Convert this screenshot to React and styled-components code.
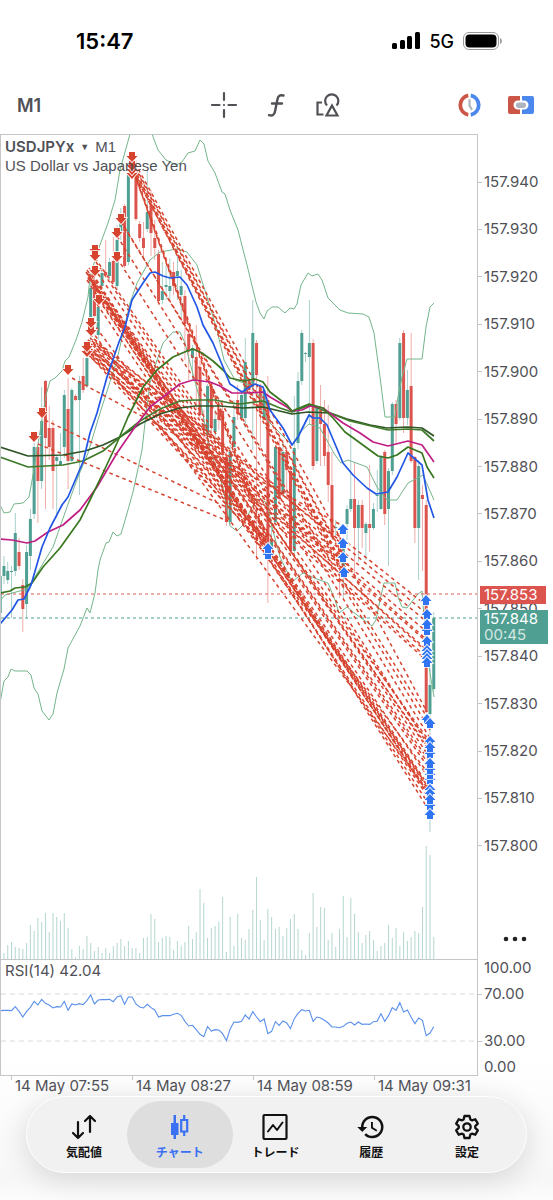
import React from "react";
import styled, { createGlobalStyle } from "styled-components";
import { MdHistory } from "react-icons/md";

const GlobalStyle = createGlobalStyle`
  * { box-sizing: border-box; }
  body {
    margin: 0;
    background: #fff;
    color: #505157;
    font-family: Inter, "Noto Sans CJK JP", sans-serif;
  }
  button { font: inherit; color: inherit; background: none; border: 0; padding: 0; cursor: pointer; }
`;

const UP = "#4f9f92";
const DOWN = "#dc544e";
const SELL = "#d6432e";
const BUY = "#2f74f2";
const LINE = "#c4c6ca";

/* ---------- layout ---------- */

const Screen = styled.main`
  min-height: 100vh;
  display: flex;
  flex-direction: column;
  background: linear-gradient(#fff 0 1060px, #f7f7f7 1180px, #fcfcfc);
`;

const StatusBar = styled.header`
  height: 82px;
  padding: 0 50px 0 76px;
  display: flex;
  align-items: center;
  justify-content: space-between;
  color: #000;
`;

const Clock = styled.time`
  font-size: 22px;
  font-weight: 600;
`;

const StatusIcons = styled.div`
  display: flex;
  align-items: center;
  gap: 9px;
  font-size: 18px;
  font-weight: 500;
  svg { display: block; }
`;

const Toolbar = styled.div`
  height: 46px;
  margin-bottom: 6px;
  padding: 0 19px 0 17px;
  display: grid;
  grid-template-columns: 1fr auto 1fr;
  align-items: center;
`;

const Timeframe = styled.button`
  justify-self: start;
  font-size: 18px;
  font-weight: 600;
`;

const ToolGroup = styled.div`
  display: flex;
  gap: 26px;
  justify-self: ${(p) => (p.$end ? "end" : "center")};
`;

const ToolButton = styled.button`
  width: 26px;
  height: 26px;
  svg { display: block; width: 26px; height: 26px; overflow: visible; }
`;

const Panel = styled.section`
  position: relative;
  display: grid;
  grid-template-columns: minmax(0, 1fr) 75px;
`;

const Plot = styled.div`
  border: 1px solid ${LINE};
  border-bottom-width: ${(p) => (p.$last ? "1px" : 0)};
  svg { display: block; width: 100%; }
`;

const Caption = styled.div`
  position: absolute;
  top: ${(p) => p.$top};
  left: 5px;
  font-family: ${(p) => (p.$plain ? "inherit" : '"Liberation Sans", sans-serif')};
  font-size: 15px;
  line-height: 18px;
`;

const SymbolButton = styled.button`
  display: flex;
  align-items: center;
  gap: 6px;
  margin-bottom: 1px;
  line-height: 18px;
  b { font-weight: 600; font-family: Inter, sans-serif; font-size: 15px; }
  small { font-size: 9px; }
`;

const PriceScale = styled.ol`
  list-style: none;
  margin: 0;
  padding: 40px 0 105px;
  display: flex;
  flex-direction: column;
  justify-content: space-between;
`;

const ScaleLabel = styled.li`
  display: flex;
  align-items: center;
  gap: 2px;
  font-size: 15px;
  line-height: 16px;
  &::before {
    content: "";
    width: 4px;
    height: 1px;
    background: ${(p) => (p.$bare ? "transparent" : LINE)};
  }
`;

const RsiScale = styled(PriceScale)`
  padding: 1px 0;
  ol { list-style: none; margin: 0; padding: 0; display: grid; gap: 10px; }
`;

const PriceTag = styled.div`
  position: absolute;
  top: ${(p) => p.$top};
  right: ${(p) => p.$right};
  left: calc(100% - 73px);
  padding: 1px 4px;
  background: ${(p) => p.$color};
  color: #fff;
  font-size: 15px;
  line-height: 16px;
  span { display: block; opacity: 0.75; }
`;

const MoreButton = styled.button`
  position: absolute;
  right: 26px;
  bottom: 15px;
  svg { display: block; }
`;

const TimeScale = styled.ol`
  list-style: none;
  margin: 0;
  padding: 0 58px 0 11px;
  display: grid;
  grid-template-columns: repeat(4, 1fr);
`;

const TimeLabel = styled.li`
  position: relative;
  padding-left: 4px;
  font-size: 15px;
  line-height: 20px;
  white-space: nowrap;
  &::before {
    content: "";
    position: absolute;
    left: 0;
    top: 0;
    width: 1px;
    height: 4px;
    background: ${LINE};
  }
`;

const TabBar = styled.nav`
  margin: 0 26px 27px;
  padding: 4px 11px 4px 9px;
  height: 77px;
  display: flex;
  border: 1px solid #fff;
  border-radius: 39px;
  background: #f1f1f1;
  box-shadow: 0 6px 30px rgba(0, 0, 0, 0.14);
`;

const Tab = styled.button`
  flex: 1;
  margin: 0 -5px;
  padding-top: 4px;
  display: flex;
  flex-direction: column;
  align-items: center;
  justify-content: center;
  gap: 2px;
  border-radius: 34px;
  background: ${(p) => (p.$active ? "#dedede" : "transparent")};
  color: ${(p) => (p.$active ? "#3a70f2" : "#111")};
  font-size: 12px;
  line-height: 18px;
  font-weight: 600;
  svg { display: block; width: 30px; height: 30px; }
`;

/* ---------- chart data ---------- */

const STEP = 3.77;
const barX = (i) => 0.2 + STEP * i;

// Each bar: high, body top, body bottom, low, direction
const candles = [
  [576, 576, 613, 613, 1], [556, 566, 576, 584, 1], [562, 571, 580, 584, 1], [566, 571, 572, 618, 1],
  [513, 533, 571, 576, 1], [538, 552, 566, 570, 0], [579, 585, 609, 632, 0], [545, 552, 604, 618, 1],
  [509, 519, 556, 570, 1], [443, 447, 514, 519, 1], [445, 447, 481, 523, 0], [387, 421, 481, 489, 1],
  [380, 381, 438, 509, 0], [406, 428, 447, 460, 0], [420, 428, 471, 509, 0], [455, 457, 461, 518, 1],
  [433, 461, 465, 466, 1], [390, 395, 447, 458, 1], [378, 409, 461, 489, 0], [388, 390, 461, 462, 1],
  [394, 396, 400, 401, 0], [376, 381, 400, 495, 1], [358, 376, 390, 393, 0], [355, 358, 386, 388, 1],
  [280, 288, 317, 350, 1], [270, 283, 316, 322, 0], [295, 307, 335, 340, 1], [268, 273, 286, 288, 1],
  [240, 272, 275, 278, 0], [258, 262, 276, 280, 1], [237, 261, 282, 284, 0], [225, 240, 286, 290, 1],
  [208, 218, 232, 240, 1], [204, 206, 266, 268, 0], [160, 174, 262, 265, 1], [158, 162, 176, 180, 0],
  [160, 172, 219, 221, 0], [221, 224, 238, 242, 0], [222, 238, 248, 258, 0], [170, 212, 229, 232, 1],
  [190, 204, 233, 256, 0], [220, 238, 248, 260, 0], [250, 254, 301, 305, 0], [262, 291, 300, 304, 1],
  [265, 285, 287, 300, 1], [258, 286, 291, 300, 1], [262, 272, 286, 295, 0], [255, 271, 276, 300, 1],
  [270, 286, 295, 320, 1], [290, 296, 324, 360, 0], [332, 334, 349, 380, 0], [345, 348, 358, 380, 1],
  [325, 357, 380, 410, 0], [360, 367, 415, 418, 0], [410, 424, 430, 440, 0], [384, 386, 435, 445, 1],
  [384, 386, 428, 432, 0], [410, 419, 432, 440, 1], [400, 409, 420, 430, 0], [400, 411, 452, 458, 0],
  [450, 457, 522, 526, 0], [445, 452, 522, 525, 1], [400, 417, 447, 450, 1], [385, 400, 414, 420, 0],
  [392, 395, 418, 420, 1], [338, 362, 418, 428, 1], [378, 380, 390, 395, 0], [300, 333, 385, 450, 1],
  [340, 343, 375, 560, 0], [384, 386, 410, 447, 0], [388, 390, 418, 420, 1], [376, 400, 545, 603, 0],
  [520, 540, 547, 562, 1], [445, 447, 522, 524, 1], [440, 447, 499, 502, 0], [440, 452, 494, 497, 1],
  [448, 452, 470, 497, 0], [466, 471, 551, 556, 0], [396, 448, 551, 556, 1], [372, 381, 443, 449, 1],
  [330, 333, 381, 385, 1], [352, 353, 354, 362, 1], [300, 343, 357, 424, 1], [339, 343, 466, 470, 0],
  [406, 408, 461, 464, 1], [385, 410, 424, 466, 0], [400, 424, 456, 466, 0], [405, 452, 485, 502, 0],
  [452, 485, 537, 540, 0], [520, 527, 528, 536, 1], [528, 548, 552, 598, 0], [540, 545, 572, 598, 1],
  [505, 509, 524, 540, 1], [424, 499, 509, 512, 1], [463, 499, 528, 576, 0], [500, 505, 528, 562, 1],
  [500, 505, 528, 548, 0], [522, 524, 533, 560, 1], [465, 524, 528, 552, 0], [503, 509, 528, 530, 1],
  [470, 495, 496, 512, 1], [455, 456, 509, 510, 1], [450, 452, 514, 525, 0], [468, 471, 509, 566, 1],
  [402, 404, 471, 475, 1], [400, 404, 424, 445, 0], [338, 343, 418, 420, 1], [330, 333, 418, 433, 0],
  [370, 390, 418, 425, 1], [333, 386, 461, 463, 0], [456, 457, 528, 543, 0], [460, 466, 528, 580, 1],
  [485, 495, 499, 571, 0], [500, 505, 712, 715, 0], [650, 685, 714, 832, 1], [612, 618, 689, 692, 1],
];

const volume = [
  0, 6, 14, 17, 12, 11, 10, 16, 34, 28, 41, 37, 46, 27, 46, 42, 38, 46, 31, 10, 2, 13, 10, 23, 16, 8, 12, 6, 11,
  6, 13, 16, 20, 13, 18, 11, 11, 6, 21, 22, 45, 40, 17, 21, 23, 22, 9, 18, 13, 17, 33, 20, 27, 70, 56, 21, 31, 33,
  37, 62, 7, 42, 13, 45, 21, 19, 30, 49, 82, 39, 19, 50, 42, 30, 32, 23, 31, 40, 45, 30, 9, 4, 26, 66, 32, 52, 51,
  19, 26, 12, 30, 63, 22, 61, 45, 27, 16, 24, 28, 19, 8, 13, 16, 34, 21, 31, 13, 27, 18, 22, 28, 26, 52, 113, 104, 22,
];

const rsi = [
  512, 511, 511, 512, 500, 514, 531, 514, 502, 484, 495, 478, 490, 495, 504, 500, 501, 484, 511, 492, 495, 491,
  494, 482, 465, 492, 480, 479, 479, 478, 485, 471, 467, 493, 471, 471, 492, 501, 504, 493, 503, 510, 531, 527,
  527, 527, 523, 520, 526, 544, 558, 556, 569, 583, 590, 560, 573, 569, 570, 581, 602, 567, 546, 547, 544, 525,
  537, 515, 531, 545, 537, 581, 574, 545, 556, 543, 549, 566, 536, 520, 509, 513, 511, 544, 531, 534, 541, 549,
  561, 561, 563, 559, 550, 546, 555, 546, 553, 552, 553, 545, 544, 521, 544, 527, 503, 511, 488, 516, 510, 532,
  551, 534, 541, 587, 579, 560,
];

const bands = [
  "0,505 4,513 10,512 14,504 23,503 29,497 33,475 37,450 42,420 46,395 50,381 55,378 62,371 65,361 69,357 76,340 82,322 88,297 90,277 97,253 108,223 115,200 120,170 130,134 134,120 146,120 152,134 158,150 166,160 176,165 182,162 188,153 195,151 200,140 204,144 208,161 215,173 222,192 225,194 230,210 238,230 247,265 256,302 260,313 264,319 267,311 272,307 278,307 285,313 290,308 294,309 297,304 301,285 308,273 312,276 318,274 322,280 328,298 333,303 340,310 348,313 363,314 369,317 374,333 380,377 385,417 395,417 398,397 402,377 407,359 422,359 426,327 430,307 434,303",
  "0,601 5,595 27,589 33,580 53,547 67,507 78,477 88,453 100,413 117,360 123,333 130,303 137,283 150,260 160,252 177,249 187,252 197,265 207,297 217,330 224,360 235,380 250,385 260,397 267,420 280,433 292,445 300,432 309,424 320,428 335,455 341,463 348,460 367,467 377,487 387,500 397,500 408,483 423,475 434,500",
  "0,703 4,681 8,677 11,669 15,671 27,671 31,675 34,688 38,694 42,711 49,720 53,714 57,693 64,669 68,648 80,626 87,608 90,613 95,593 98,570 100,560 106,543 109,542 113,532 117,536 121,534 126,517 133,492 142,450 145,423 150,383 157,360 163,343 173,332 180,332 185,343 190,363 200,400 210,450 223,487 230,526 237,531 243,525 253,505 260,499 267,503 272,527 280,557 292,582 303,573 317,579 328,583 335,600 339,613 347,607 357,615 372,626 376,620 380,600 384,583 395,583 398,597 402,607 407,608 417,595 422,591 424,617 430,673 434,697",
];

const averages = [
  { color: "#2f5527", pts: "0,447 28,456 63,455 85,451 103,445 120,437 140,424 160,414 180,408 195,406 220,406 243,408 263,407 292,414 308,412 330,413 347,419 370,425 387,428 407,427 422,428 434,436" },
  { color: "#3f7a2a", pts: "0,457 28,467 63,465 83,461 103,451 120,437 140,421 160,409 180,401 193,400 215,400 230,403 240,404 263,401 280,408 292,412 310,405 330,413 350,421 388,430 408,429 422,430 434,441" },
  { color: "#bf1f84", pts: "0,539 12,540 27,543 35,541 48,532 63,525 80,510 97,487 117,453 135,427 150,407 163,397 180,384 193,380 210,382 220,386 232,393 247,393 263,392 270,397 287,407 292,411 302,410 310,406 323,408 343,423 360,433 373,442 388,446 408,441 422,445 434,462" },
  { color: "#38771f", pts: "0,593 10,591 15,588 25,587 32,583 43,567 60,548 80,520 90,500 103,473 117,443 128,417 143,387 157,370 173,357 187,351 193,349 202,353 213,361 223,370 230,378 243,381 255,379 263,382 270,392 287,405 292,411 309,404 323,408 333,418 345,432 367,448 378,456 388,458 397,455 408,447 422,453 427,467 434,478" },
  { color: "#2257e6", pts: "0,624 12,610 18,600 24,599 31,585 42,547 50,528 62,505 68,497 83,462 90,433 97,413 107,377 119,342 125,327 132,300 143,283 150,273 155,272 163,276 170,278 180,277 187,285 197,307 203,325 213,343 223,367 230,384 242,392 248,388 255,384 263,387 270,410 283,428 292,445 298,437 309,415 313,418 320,418 327,425 343,463 353,475 367,488 376,494 388,492 397,477 408,453 422,465 428,500 434,518" },
];

// Closed trades: entry x, entry y, exit x, exit y
const trades = [
  [45, 420, 228, 508], [38, 444, 228, 521], [72, 378, 343, 526],
  [88, 352, 268, 540], [87, 348, 268, 545], [90, 356, 268, 550],
  [88, 340, 268, 536], [90, 334, 268, 543], [85, 343, 268, 552],
  [88, 340, 343, 543], [91, 344, 343, 557], [86, 346, 343, 565], [92, 350, 343, 572],
  [90, 338, 427, 606], [93, 343, 427, 622], [88, 347, 427, 632], [92, 341, 427, 640],
  [86, 350, 427, 650], [90, 353, 427, 658], [94, 339, 427, 614], [91, 349, 427, 652],
  [89, 345, 427, 642], [87, 354, 427, 661],
  [87, 270, 430, 742], [89, 274, 430, 750], [88, 277, 430, 762], [91, 280, 430, 770],
  [86, 272, 430, 790], [89, 268, 430, 798], [92, 274, 430, 812], [87, 280, 430, 806],
  [88, 278, 430, 795], [90, 279, 430, 796], [89, 276, 430, 788], [92, 282, 430, 792], [87, 273, 430, 766],
  [95, 258, 430, 745], [96, 262, 430, 758], [94, 268, 430, 752], [98, 295, 430, 780], [99, 300, 430, 790],
  [97, 304, 430, 800], [92, 322, 430, 776], [91, 330, 430, 795],
  [117, 236, 430, 738], [121, 222, 430, 722], [117, 258, 430, 748], [124, 226, 430, 730],
  [132, 165, 268, 540], [133, 170, 268, 548], [132, 167, 268, 544], [134, 166, 343, 557], [132, 170, 343, 565],
  [133, 168, 343, 572], [135, 163, 343, 543], [134, 172, 343, 576], [136, 168, 427, 712],
  [134, 169, 343, 568],
];

const sells = [
  [34, 437], [42, 413], [68, 370], [87, 352], [87, 347], [91, 331], [91, 323], [99, 300], [95, 271],
  [95, 250], [95, 256], [117, 257], [117, 233], [121, 219], [132, 174], [132, 170], [132, 166], [132, 157],
];

const buys = [
  [268, 554], [268, 548], [343, 529], [343, 543], [343, 557], [344, 572],
  [426, 600], [427, 614], [427, 630], [427, 624], [427, 641], [427, 650], [427, 654], [427, 658], [427, 662],
  [427, 719], [430, 723], [430, 741], [430, 753], [430, 747], [430, 779], [430, 774], [430, 769], [430, 763],
  [430, 789], [430, 793], [430, 805], [430, 799], [430, 814],
];

const gridPrices = Array.from({ length: 15 }, (_, i) => (157.94 - i * 0.01).toFixed(3));
const times = ["14 May 07:55", "14 May 08:27", "14 May 08:59", "14 May 09:31"];

/* ---------- drawings ---------- */

const Arrow = ({ x, y, up }) => (
  <path
    transform={`translate(${x} ${y})${up ? " rotate(180)" : ""}`}
    d="M-3-5H3V-1H5.5L0 5L-5.5-1H-3Z"
    fill={up ? BUY : SELL}
    stroke="#fff"
    strokeWidth="1.6"
    paintOrder="stroke"
  />
);

const PriceDrawing = () => (
  <svg viewBox="1 135 476 824" height="824" preserveAspectRatio="none" role="img" aria-label="USDJPYx M1">
    {volume.map((h, i) => (
      <rect key={i} x={barX(i) - 0.5} y={959 - h} width="1" height={h} fill="#b5d6cf" />
    ))}
    {candles.map(([h, t, b, l, up], i) => (
      <g key={i} fill={up ? UP : DOWN}>
        <rect x={barX(i) - 0.4} y={h} width="0.8" height={l - h} opacity="0.6" />
        <rect x={barX(i) - 1.5} y={t} width="3" height={Math.max(b - t, 1)} />
      </g>
    ))}
    {bands.map((p) => (
      <polyline key={p} points={p} fill="none" stroke="#74b58a" strokeWidth="1" />
    ))}
    <path d="M1 594H477" stroke="#d95d55" strokeDasharray="3 3" />
    <path d="M1 618H477" stroke={UP} strokeDasharray="3 3" />
    {trades.map((t, i) => (
      <line
        key={i}
        x1={t[0]}
        y1={t[1]}
        x2={t[2]}
        y2={t[3]}
        stroke={SELL}
        strokeWidth="1.5"
        strokeDasharray="3.600 3.400"
      />
    ))}
    {averages.map((a) => (
      <polyline key={a.pts} points={a.pts} fill="none" stroke={a.color} strokeWidth="1.7" strokeLinejoin="round" />
    ))}
    {sells.map(([x, y], i) => <Arrow key={i} x={x} y={y} />)}
    {buys.map(([x, y], i) => <Arrow key={i} x={x} y={y} up />)}
  </svg>
);

const RsiDrawing = () => (
  <svg viewBox="1 360 476 115" height="115" preserveAspectRatio="none" role="img" aria-label="RSI">
    <path d="M1 394H477M1 441H477" stroke="#d9dadd" strokeDasharray="5 4" />
    <polyline
      points={rsi.map((v, i) => `${barX(i)},${360 + (v - 360) / 3}`).join(" ")}
      fill="none"
      stroke="#5a8fea"
      strokeWidth="1.1"
    />
  </svg>
);

const gearPoints = Array.from({ length: 6 }, (_, i) => i * 60 - 90)
  .flatMap((a) => [[a - 24, 7.2], [a - 13, 9.8], [a + 13, 9.8], [a + 24, 7.2]])
  .map(([a, r]) => {
    const rad = (a * Math.PI) / 180;
    return `${(12 + r * Math.cos(rad)).toFixed(2)},${(12 + r * Math.sin(rad)).toFixed(2)}`;
  })
  .join(" ");

const stroke = { fill: "none", stroke: "currentColor", strokeWidth: 2, strokeLinecap: "round", strokeLinejoin: "round" };

const tabs = [
  {
    label: "気配値",
    icon: (
      <svg viewBox="-1 -1 30 30" {...stroke} strokeWidth="2.2">
        <path d="M8 9V25M3 20L8 25L13 20M20 19V3M15 8L20 3L25 8" />
      </svg>
    ),
  },
  {
    label: "チャート",
    active: true,
    icon: (
      <svg viewBox="0 -1 30 30">
        <path d="M8.500 2H11V10H13.500V22H11V26H8.500V22H6V10H8.500Z" fill="currentColor" />
        <path d="M19.200 2V6M19.200 19V23M16.200 7H22.200V18.500H16.200Z" fill="none" stroke="currentColor" strokeWidth="2.200" />
      </svg>
    ),
  },
  {
    label: "トレード",
    icon: (
      <svg viewBox="-1 -1 30 30" {...stroke}>
        <rect x="2.500" y="2" width="23" height="24" rx="1" strokeWidth="2.200" />
        <path d="M7 18.500L12 12L16 17L21.500 9.500" />
      </svg>
    ),
  },
  { label: "履歴", icon: <MdHistory /> },
  {
    label: "設定",
    icon: (
      <svg viewBox="-1 -1 26 26" {...stroke}>
        <polygon points={gearPoints} />
        <circle cx="12" cy="12" r="3.200" />
      </svg>
    ),
  },
];

/* ---------- screen ---------- */

export default function App() {
  return (
    <Screen>
      <GlobalStyle />
      <StatusBar>
        <Clock>15:47</Clock>
        <StatusIcons>
          <svg width="28" height="18" viewBox="0 0 28 18" aria-hidden="true">
            <rect x="0" y="11" width="5" height="6" rx="1.500" />
            <rect x="8" y="8" width="5" height="9" rx="1.500" />
            <rect x="15" y="4" width="5" height="13" rx="1.500" />
            <rect x="23" y="0" width="5" height="17" rx="1.500" />
          </svg>
          5G
          <svg width="40" height="18" viewBox="0 0 40 18" aria-hidden="true">
            <rect x="0.500" y="0.500" width="35" height="17" rx="5.500" fill="none" stroke="#999" />
            <rect x="2.500" y="2.500" width="31" height="13" rx="4" />
            <path d="M37 6C39.500 7 39.500 11 37 12Z" fill="#999" />
          </svg>
        </StatusIcons>
      </StatusBar>

      <Toolbar>
        <Timeframe>M1</Timeframe>
        <ToolGroup>
          <ToolButton aria-label="Crosshair">
            <svg viewBox="0 0 26 26" {...stroke} strokeWidth="2.200">
              <path d="M13 1V8M13 18V25M1 13H8.500M17.500 13H25M13 13V13.010" />
            </svg>
          </ToolButton>
          <ToolButton aria-label="Indicators">
            <svg viewBox="0 0 26 26" {...stroke} strokeWidth="2.400">
              <path d="M20.500 3.500C17 2.500 15.100 4 14.400 7.500L12 19.500C11.300 23 9.500 24.200 6 23.200M9 11.500H19" />
            </svg>
          </ToolButton>
          <ToolButton aria-label="Objects">
            <svg viewBox="0 0 26 26" fill="none" stroke="currentColor" strokeWidth="2.200">
              <path d="M7 10.500H2.500V22.500H8.500M12 13.500A6.600 6.600 0 1 1 21.500 13.500" />
              <path d="M17 13.500L22.500 23.500H11.500Z" />
            </svg>
          </ToolButton>
        </ToolGroup>
        <ToolGroup $end>
          <ToolButton aria-label="Pending order">
            <svg viewBox="0 0 26 26" fill="none">
              <path d="M12.200 3.400A9.900 9.900 0 0 0 12.200 22.800" stroke="#cb5648" strokeWidth="3.800" />
              <path d="M14.800 3.400A9.900 9.900 0 0 1 14.800 22.800" stroke="#4b87ec" strokeWidth="3.800" />
              <path d="M13.500 8V13.500L15.500 17" stroke="#aeb4bd" strokeWidth="2.200" strokeLinecap="round" />
            </svg>
          </ToolButton>
          <ToolButton aria-label="One click trading">
            <svg viewBox="0 0 26 26">
              <path d="M2 4H12V8.500H10A4.500 4.500 0 0 0 10 17.500H12V22H2A2 2 0 0 1 0 20V6A2 2 0 0 1 2 4Z" fill="#cb5648" />
              <path d="M24 4H14V8.500H16A4.500 4.500 0 0 1 16 17.500H14V22H24A2 2 0 0 0 26 20V6A2 2 0 0 0 24 4Z" fill="#4b87ec" />
              <rect x="8" y="10.500" width="10" height="5.500" rx="2.700" fill="#aeb4bd" />
            </svg>
          </ToolButton>
        </ToolGroup>
      </Toolbar>

      <Panel>
        <Plot>
          <PriceDrawing />
        </Plot>
        <PriceScale>
          {gridPrices.map((p) => <ScaleLabel key={p}>{p}</ScaleLabel>)}
        </PriceScale>
        <Caption $top="4px">
          <SymbolButton>
            <b>USDJPYx</b>
            <small>▼</small>
            M1
          </SymbolButton>
          US Dollar vs Japanese Yen
        </Caption>
        <PriceTag $top="452px" $right="7px" $color={DOWN}>157.853</PriceTag>
        <PriceTag $top="476px" $right="5px" $color={UP}>
          157.848
          <span>00:45</span>
        </PriceTag>
        <MoreButton aria-label="More">
          <svg width="24" height="10" viewBox="0 0 24 10" fill="#222">
            <circle cx="3" cy="5" r="2.300" />
            <circle cx="12" cy="5" r="2.300" />
            <circle cx="21" cy="5" r="2.300" />
          </svg>
        </MoreButton>
      </Panel>

      <Panel>
        <Plot $last>
          <RsiDrawing />
        </Plot>
        <RsiScale as="div">
          <ol>
            <ScaleLabel $bare>100.00</ScaleLabel>
            <ScaleLabel>70.00</ScaleLabel>
          </ol>
          <ol>
            <ScaleLabel>30.00</ScaleLabel>
            <ScaleLabel $bare>0.00</ScaleLabel>
          </ol>
        </RsiScale>
        <Caption $plain $top="3px">RSI(14) 42.04</Caption>
      </Panel>

      <TimeScale>
        {times.map((t) => <TimeLabel key={t}>{t}</TimeLabel>)}
      </TimeScale>

      <TabBar>
        {tabs.map((t) => (
          <Tab key={t.label} $active={t.active} aria-current={t.active ? "page" : undefined}>
            {t.icon}
            {t.label}
          </Tab>
        ))}
      </TabBar>
    </Screen>
  );
}
